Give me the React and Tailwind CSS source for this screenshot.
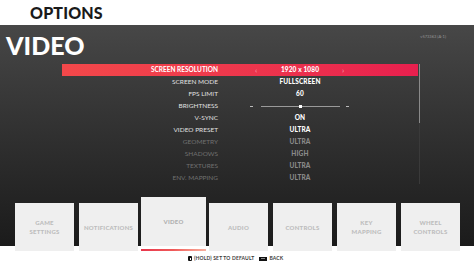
import React from "react";

const rows = [
  { label: "SCREEN RESOLUTION", value: "1920 x 1080", active: true },
  { label: "SCREEN MODE", value: "FULLSCREEN" },
  { label: "FPS LIMIT", value: "60" },
  { label: "BRIGHTNESS", slider: true },
  { label: "V-SYNC", value: "ON" },
  { label: "VIDEO PRESET", value: "ULTRA" },
  { label: "GEOMETRY", value: "ULTRA", dim: true },
  { label: "SHADOWS", value: "HIGH", dim: true },
  { label: "TEXTURES", value: "ULTRA", dim: true },
  { label: "ENV. MAPPING", value: "ULTRA", dim: true },
];

const tabs = [
  ["GAME", "SETTINGS"],
  ["NOTIFICATIONS"],
  ["VIDEO"],
  ["AUDIO"],
  ["CONTROLS"],
  ["KEY", "MAPPING"],
  ["WHEEL", "CONTROLS"],
];

const Row = ({ row }) => {
  return (
    <div
      className={
        "flex h-3 items-center " +
        (row.active ? "bg-gradient-to-r from-[#f3484a] to-[#e81f4e]" : "")
      }
    >
      <div
        className={
          "w-[156px] text-right text-[6.5px] " +
          (row.active ? "font-bold text-white" : row.dim ? "font-normal text-[#707070]" : "font-normal text-[#e0e0e0]")
        }
      >
        {row.label}
      </div>
      <div className="relative flex h-full w-[164px] items-center justify-center">
        {row.active && (
          <>
            <span className="absolute left-[37px] text-[8px] text-[#f7a3ad]">‹</span>
            <span className="absolute left-[124px] text-[8px] text-[#f7a3ad]">›</span>
          </>
        )}
        {row.slider ? (
          <div className="relative h-full w-full">
            <span className="absolute left-[32px] top-[5.5px] h-px w-[3px] bg-[#bbb]"></span>
            <span className="absolute left-[43px] top-[5.5px] h-px w-[79px] bg-[#9a9a9a]"></span>
            <span className="absolute left-[81px] top-[4.5px] h-[3px] w-[3px] bg-white"></span>
            <span className="absolute left-[128px] top-[5.5px] h-px w-[3px] bg-[#bbb]"></span>
          </div>
        ) : (
          <span
            className={
              "text-[6.5px] font-black tracking-[0.02em] " +
              (row.dim ? "text-[#8a8a8a]" : "text-white")
            }
          >
            {row.value}
          </span>
        )}
      </div>
    </div>
  );
};

export default function App() {
  return (
    <div
      className="h-[266px] w-[474px] overflow-hidden bg-white"
      style={{ fontFamily: "Lato, 'Open Sans', sans-serif" }}
    >
      <div className="flex h-[25px] items-center pl-[30px]">
        <h1 className="text-[16px] font-black leading-none tracking-[0.01em] text-[#1a1a1a]">OPTIONS</h1>
      </div>

      <div className="h-[221px] bg-gradient-to-b from-[#474747] to-[#1b1b1b]">
        <div className="flex items-start justify-between pl-[6px] pr-[28px] pt-[8px]">
          <h2 className="text-[25px] font-black leading-none text-white">VIDEO</h2>
          <span className="mt-[1px] text-[4px] text-[#9a9a9a]">v573363 (A-1)</span>
        </div>
        <div className="mt-[6px] flex pl-[62px]">
          <div className="w-[356px]">
            {rows.map((row) => (
              <Row key={row.label} row={row} />
            ))}
          </div>
          <div className="ml-px flex w-px flex-col">
            <div className="h-[59px] bg-[#8a8a8a]"></div>
            <div className="h-[61px] bg-[#3a3a3a]"></div>
          </div>
        </div>
      </div>

      <div className="-mt-[49px] flex items-start gap-[5px] pl-[15px]">
        {tabs.map((t) => {
          const active = t[0] === "VIDEO";
          return (
            <div key={t.join(" ")} className={active ? "-mx-[2px] w-[65px]" : "mt-[6px] w-[59px]"}>
              <div
                className={
                  "flex flex-col items-center justify-center bg-[#efefef] text-center text-[6px] font-black leading-[1.5] tracking-[0.04em] " +
                  (active ? "h-[49px] text-[#b0b0b0]" : "h-[48px] text-[#bdbdbd]")
                }
              >
                {t.map((line) => (
                  <span key={line}>{line}</span>
                ))}
              </div>
              {active && <div className="mt-[3px] h-[2px] bg-gradient-to-r from-[#e8344c] via-[#ef5a5a] to-[#f7b0a0]"></div>}
            </div>
          );
        })}
      </div>

      <div className="flex h-[15px] items-center pl-[188px] text-[5px] font-bold tracking-[0.03em] text-[#3a3a3a]">
        <span className="mr-[2px] flex h-[5px] w-[4px] items-center justify-center rounded-[1px] bg-[#111]">
          <span className="h-[2px] w-[1px] bg-white"></span>
        </span>
        <span>(HOLD) SET TO DEFAULT</span>
        <span className="ml-[5px] mr-[2px] flex h-[4px] w-[8px] items-center justify-center bg-[#111]">
          <span className="h-px w-[4px] bg-[#888]"></span>
        </span>
        <span>BACK</span>
      </div>
    </div>
  );
}
